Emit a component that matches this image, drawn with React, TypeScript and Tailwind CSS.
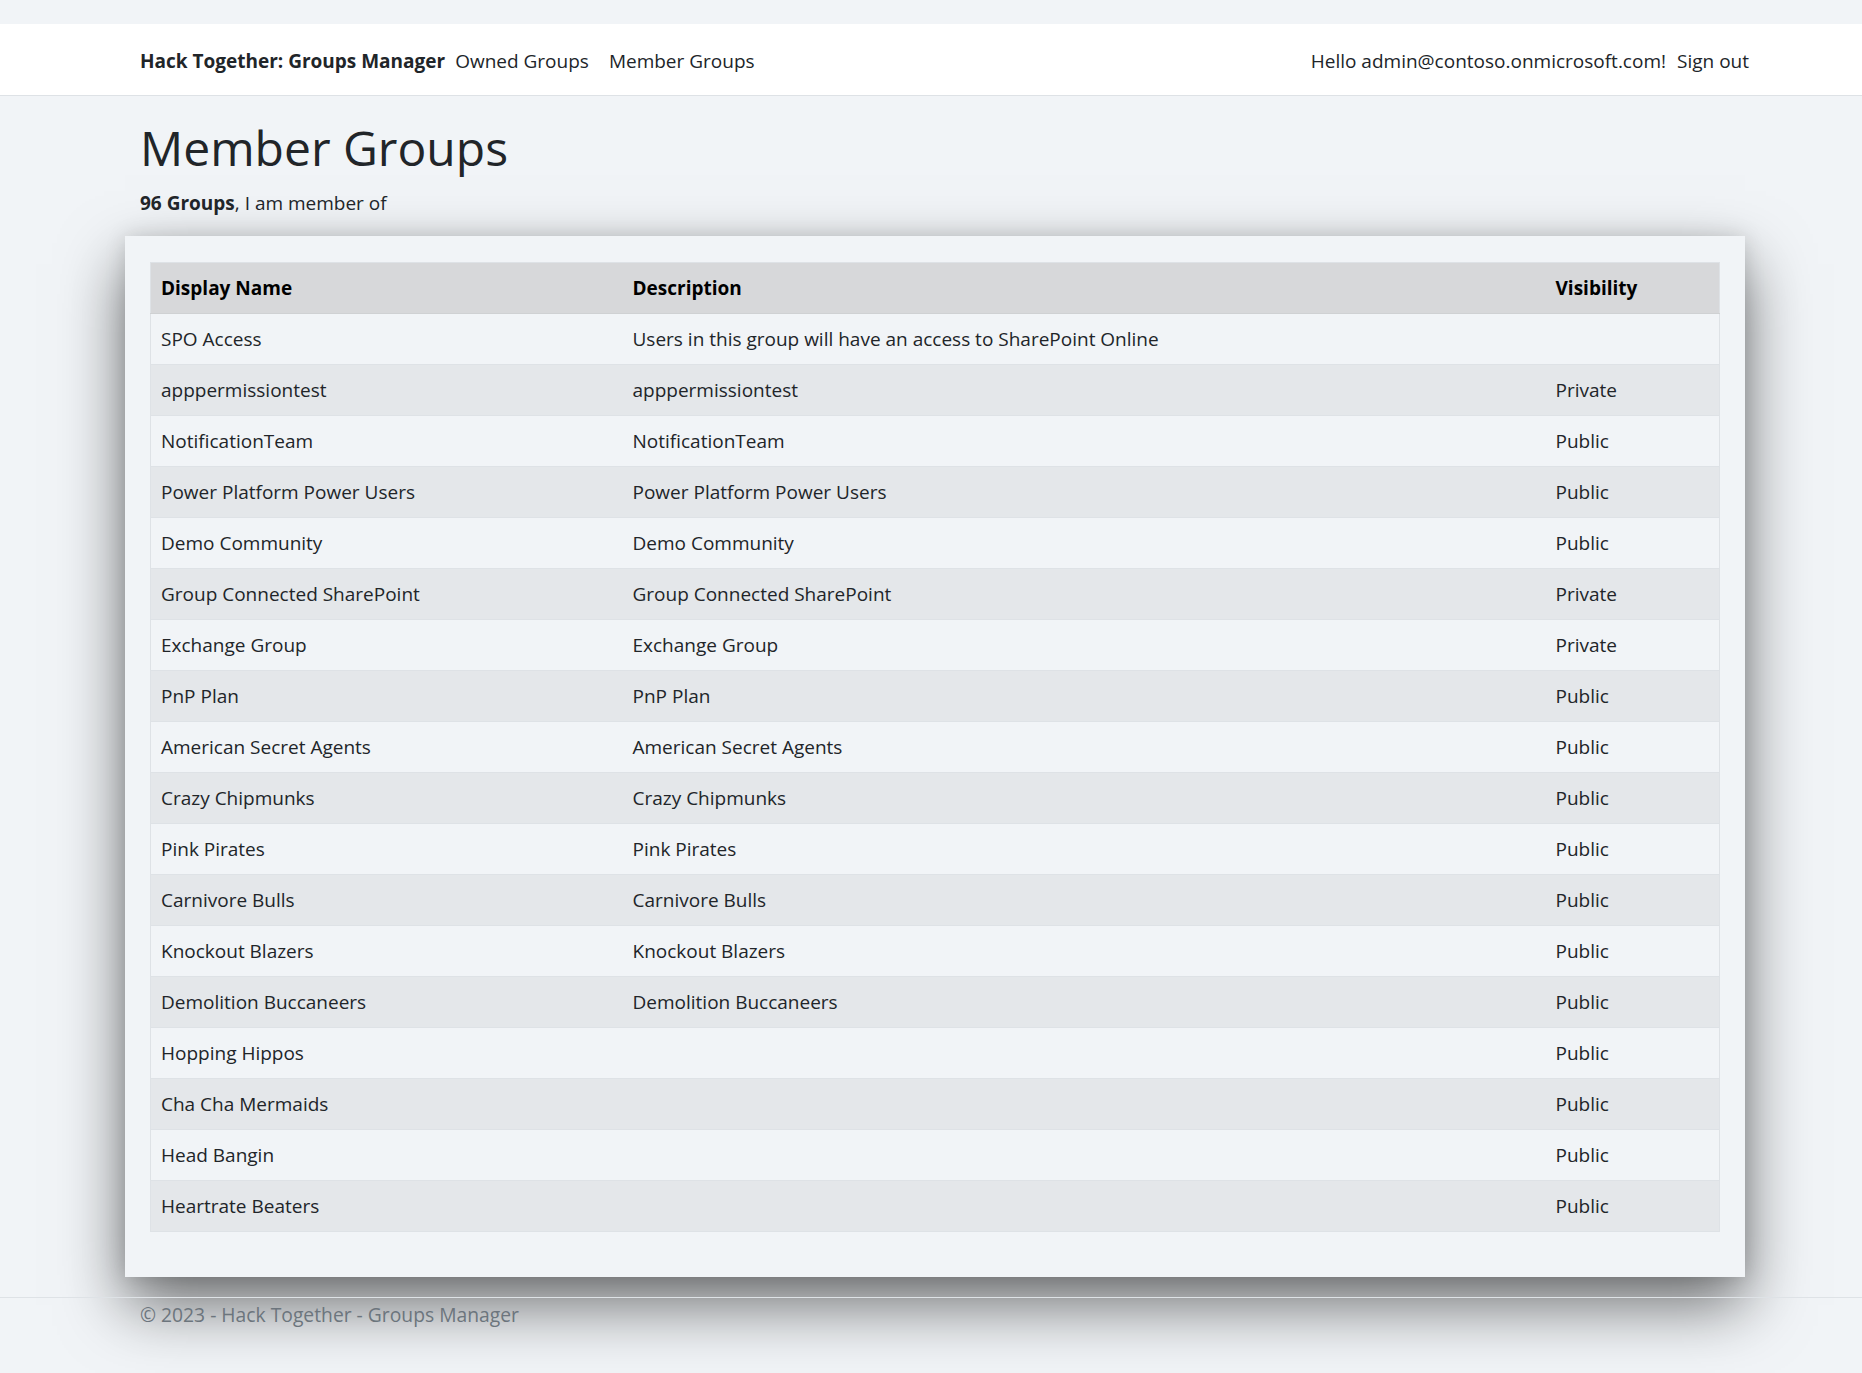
const groups: [string, string, string][] = [
  ['SPO Access', 'Users in this group will have an access to SharePoint Online', ''],
  ['apppermissiontest', 'apppermissiontest', 'Private'],
  ['NotificationTeam', 'NotificationTeam', 'Public'],
  ['Power Platform Power Users', 'Power Platform Power Users', 'Public'],
  ['Demo Community', 'Demo Community', 'Public'],
  ['Group Connected SharePoint', 'Group Connected SharePoint', 'Private'],
  ['Exchange Group', 'Exchange Group', 'Private'],
  ['PnP Plan', 'PnP Plan', 'Public'],
  ['American Secret Agents', 'American Secret Agents', 'Public'],
  ['Crazy Chipmunks', 'Crazy Chipmunks', 'Public'],
  ['Pink Pirates', 'Pink Pirates', 'Public'],
  ['Carnivore Bulls', 'Carnivore Bulls', 'Public'],
  ['Knockout Blazers', 'Knockout Blazers', 'Public'],
  ['Demolition Buccaneers', 'Demolition Buccaneers', 'Public'],
  ['Hopping Hippos', '', 'Public'],
  ['Cha Cha Mermaids', '', 'Public'],
  ['Head Bangin', '', 'Public'],
  ['Heartrate Beaters', '', 'Public'],
]

function NavBar() {
  return (
    <nav className="border-b border-[#dee2e6] bg-white">
      <div className="ml-[125px] flex h-[71px] w-[1620px] items-center justify-between pl-[15px] pt-[3px] text-[19px] text-[#212529]">
        <div className="flex items-center">
          <a className="mr-[10px] font-bold text-[#212529]">Hack Together: Groups Manager</a>
          <a className="pr-[20px] text-[#212529]">Owned Groups</a>
          <a className="text-[#212529]">Member Groups</a>
        </div>
        <div className="mr-[-4px] flex items-center gap-[11px]">
          <span>Hello admin@contoso.onmicrosoft.com!</span>
          <a className="text-[#212529]">Sign out</a>
        </div>
      </div>
    </nav>
  )
}

function GroupsTable() {
  return (
    <table className="w-full border-collapse border border-[#dee2e6] text-left text-[19px] text-[#212529]">
      <thead>
        <tr className="bg-[#d7d8da] text-black">
          <th className="h-[51px] w-[472px] border-b border-[#cfd1d3] px-[10px] font-bold">Display Name</th>
          <th className="h-[51px] border-b border-[#cfd1d3] px-[10px] font-bold">Description</th>
          <th className="h-[51px] w-[174px] border-b border-[#cfd1d3] px-[10px] font-bold">Visibility</th>
        </tr>
      </thead>
      <tbody>
        {groups.map(([name, desc, vis], i) => (
          <tr key={name} className={i % 2 === 1 ? 'bg-[#e4e7ea]' : 'bg-[#f1f4f7]'}>
            <td className="h-[51px] border-b border-[#dee2e6] px-[10px]">{name}</td>
            <td className="h-[51px] border-b border-[#dee2e6] px-[10px]">{desc}</td>
            <td className="h-[51px] border-b border-[#dee2e6] px-[10px]">{vis}</td>
          </tr>
        ))}
      </tbody>
    </table>
  )
}

export default function App() {
  return (
    <div
      className="min-h-[1373px] overflow-hidden bg-[#f1f4f7] pt-[24px] text-[#212529]"
      style={{ fontFamily: '"Open Sans", "Noto Sans", sans-serif' }}
    >
      <NavBar />
      <main className="ml-[125px] w-[1620px]">
        <div className="px-[15px] pt-[22px]">
          <h1 className="text-[48px] font-normal leading-[60px] text-[#212529]">Member Groups</h1>
          <p className="mt-[10px] text-[19px] leading-[30px]">
            <b className="font-bold">96 Groups</b>, I am member of
          </p>
        </div>
        <div className="mt-[18px] bg-[#f1f4f7] px-[25px] pb-[45px] pt-[26px] shadow-[0_28px_60px_rgba(0,0,0,0.55),0_0_20px_rgba(0,0,0,0.12)]">
          <GroupsTable />
        </div>
      </main>
      <footer className="mt-[20px] border-t border-[#dee2e6]">
        <div className="ml-[125px] w-[1620px] px-[15px] py-[2px] text-[19.3px] leading-[30px] text-[#6c757d]">
          © 2023 - Hack Together - Groups Manager
        </div>
      </footer>
    </div>
  )
}
